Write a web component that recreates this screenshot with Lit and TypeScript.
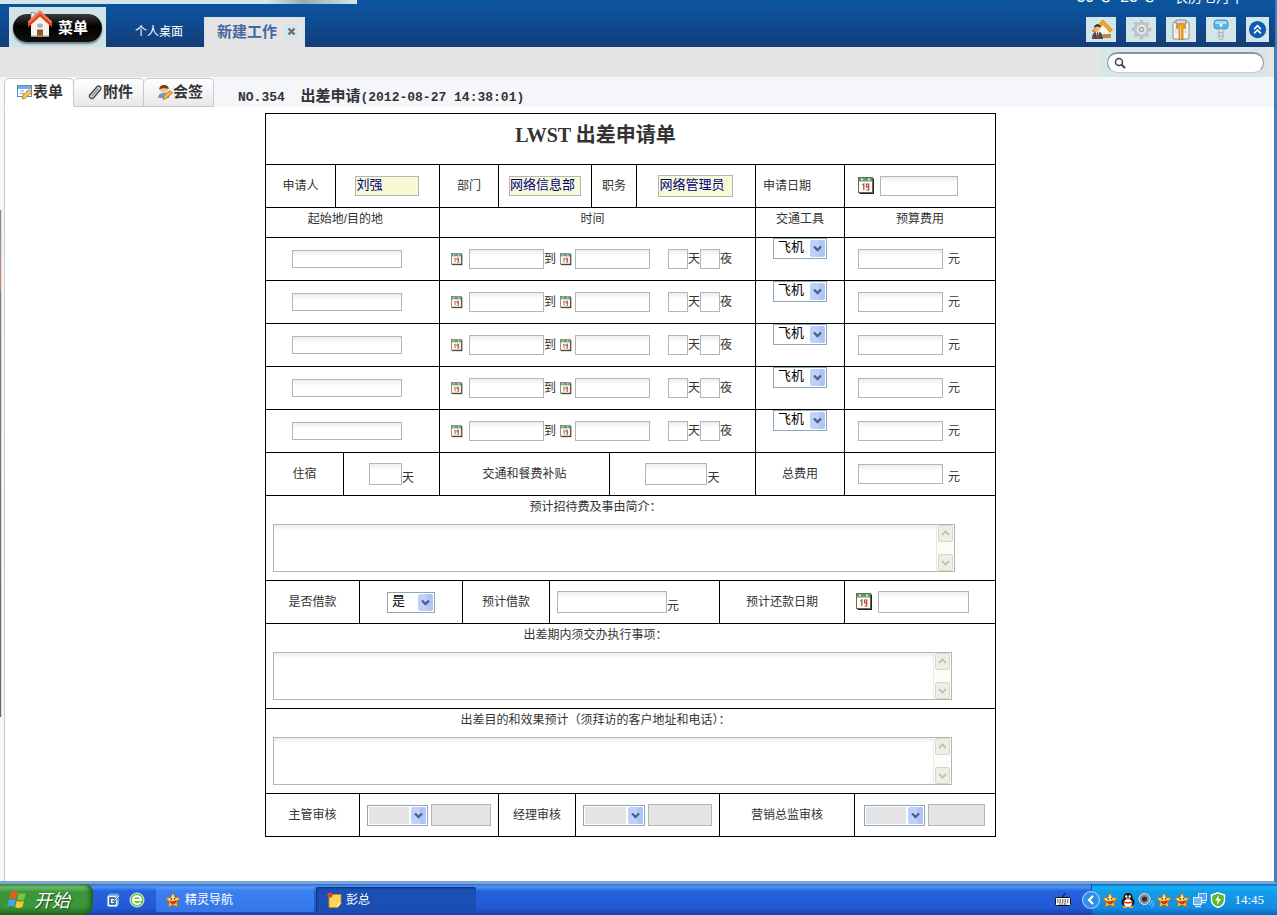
import { LitElement, html, css, svg, nothing } from "lit";
import { customElement, property } from "lit/decorators.js";

const icons = {
  house: svg`
    <rect x="4" y="2" width="4" height="8" fill="#e6e6e6" stroke="#777" stroke-width=".6"/>
    <path d="M4 13L13 5l9 8v13H4z" fill="#f7f3ec"/>
    <path d="M13 0L1 11v6l12-11 12 11v-6z" fill="#e2401c"/>
    <path d="M13 0L1 11l1 2L13 3l11 10 1-2z" fill="#f57b55"/>
    <rect x="10" y="13" width="6" height="4" rx="2" fill="#9db4c8"/>
    <rect x="10" y="19" width="6" height="7" fill="#8a5a2c"/>
    <rect x="4" y="25" width="18" height="1" fill="#b9a58a"/>`,
  form: svg`
    <rect x=".5" y="1.500" width="14" height="11" fill="#fff" stroke="#5b86c4"/>
    <rect x="1" y="2" width="13" height="3" fill="#7da7e0"/>
    <path d="M3 7h4M3 9.500h4M9 7h4" stroke="#7da7e0"/>
    <path d="M5 15l1-4 6.500-5.500L15 8l-6.500 6z" fill="#f6c552" stroke="#b07a20" stroke-width=".8"/>`,
  clip: svg`
    <path d="M3 11L10 2.800c1.600-1.600 5 .4 3.300 3L6.800 13.500c-2 2.200-5.600-.2-4-2.600L9.500 3.500" fill="none" stroke="#4a4a4a" stroke-width="1.500"/>
    <path d="M4.800 12.300L11.500 4.500" stroke="#9a9a9a" stroke-width="1.800"/>`,
  sign: svg`
    <circle cx="7" cy="5" r="4" fill="#f3c592"/>
    <path d="M2.500 6C1 0 12 -1 11.800 5 9 5 6 3 2.500 6z" fill="#7a3d14"/>
    <path d="M1 14c0-4 3-5 6-5s5 1 5.500 5z" fill="#5f9fdc"/>
    <path d="M6 15.500l1-4 6-5 2.500 2.500-6.500 5.500z" fill="#f6b552" stroke="#b06a20" stroke-width=".8"/>`,
  cal: svg`
    <rect x="1.500" y="1.500" width="14.500" height="15.500" fill="#222"/>
    <rect x=".5" y=".5" width="14" height="15" fill="#fffdf2" stroke="#6c6a4c"/>
    <rect x="1" y="1" width="13" height="3.500" fill="#5f9c7c"/>
    <path d="M4 1.500v2M11 1.500v2" stroke="#fff" stroke-width="1.500"/>
    <path d="M4.500 8l1.300-1v6M10.500 9.800h-2V7h2.200v6H8.500" fill="none" stroke="#b5413c" stroke-width="1.200"/>`,
  homeUser: svg`
    <path d="M8 8l6-5 6 6v10H8z" fill="#fdf6e3" stroke="#cbb791" stroke-width=".5"/>
    <path d="M3 12L14 1l9.500 10-2.500 2-7-7.500L6 13z" fill="#f4a823" stroke="#bd770e" stroke-width=".7"/>
    <circle cx="8.500" cy="9" r="2.800" fill="#e9b98a"/><path d="M5.300 9c-1-5 7.400-5 6.400 0-1.500-2-4.500-2-6.400 0z" fill="#3b2413"/>
    <path d="M3 20c0-5 2-7.500 5.500-7.500S14 15 14 20z" fill="#4b4b52"/><path d="M6.500 12.500L8.500 19l2-6.500z" fill="#fff"/><path d="M8 13h1.200l.3 4-1 1.500-1-1.500z" fill="#a33"/>
    <path d="M14 15h8v4h-8z" fill="#b98b4b"/>`,
  gear: svg`
    <path d="M11 1h2l1 3 2 .7 2.600-1.600 1.700 1.700-1.600 2.500.8 2.200 3 .8v2.400l-3 .9-.8 2 1.600 2.600-1.700 1.700-2.600-1.500-2 .8-1 3h-2l-1-3-2-.8-2.600 1.500L3.700 18l1.600-2.600-.8-2-3-.9v-2.400l3-.8.8-2.200-1.600-2.500 1.700-1.700L8 4.700 10 4z" fill="#c3c6c8" stroke="#a3a7aa" stroke-width=".6"/>
    <circle cx="12" cy="11.500" r="5.500" fill="#e6e8ea"/><circle cx="12" cy="11.500" r="3.200" fill="#a6aaad"/><circle cx="12" cy="11.500" r="1.500" fill="#d2e6ea"/>`,
  board: svg`
    <rect x="4" y="3" width="16" height="17" rx="1" fill="#f4f4f4" stroke="#8d8d8d"/>
    <path d="M7 1h10v4H7z" fill="#d8d8d8" stroke="#777" stroke-width=".8"/>
    <path d="M6 10h3M15 10h3M6 13h3M15 13h3" stroke="#c4c4c4"/>
    <path d="M7.500 6c1-1.500 8-1.500 9 0v3H14v11.500h-4V9H7.500z" fill="#f0a326" stroke="#b8760e" stroke-width=".7"/>
    <path d="M11.500 8v12" stroke="#ffd27a"/>`,
  key: svg`
    <rect x="5" y="1" width="14" height="9" rx="3" fill="#5db2ea" stroke="#2f87c6" stroke-width=".8"/>
    <rect x="6" y="2" width="12" height="3" rx="1.500" fill="#a9dbf8"/><circle cx="12" cy="6" r="1.500" fill="#fff"/>
    <path d="M10 10h4v10l-2 1-2-1z" fill="#e2e5e8" stroke="#9ba1a7" stroke-width=".7"/><path d="M8.500 13H15v1.500H8.500zM8.500 16.500H15V18H8.500z" fill="#b4babf"/>`,
  up: svg`
    <circle cx="12" cy="12" r="9" fill="#0f5cae"/>
    <path d="M8.500 11.500L12 8l3.500 3.500M8.500 16l3.500-3.500 3.500 3.500" fill="none" stroke="#fff" stroke-width="1.800"/>`,
  search: svg`
    <circle cx="5" cy="5" r="3.500" fill="none" stroke="#444" stroke-width="1.500"/><path d="M7.500 7.500L11 11" stroke="#444" stroke-width="2"/>`,
  close: svg`<path d="M1.500 1.500l6 6M7.500 1.500l-6 6" stroke="#666b70" stroke-width="2.200"/>`,
  chevron: svg`
    <rect x="0" y="0" width="15" height="17" rx="2" fill="#bfd1fb"/>
    <rect x="9" y="0" width="6" height="17" rx="2" fill="#aec5f6"/>
    <path d="M4 6.500l3.500 3.500L11 6.500" fill="none" stroke="#4d6185" stroke-width="2.400"/>`,
  barUp: svg`
    <rect x=".5" y=".5" width="14" height="16" rx="1.500" fill="#eeeee6" stroke="#d8d8ca"/><path d="M4 10l3.500-3.500L11 10" fill="none" stroke="#c3c3b8" stroke-width="2"/>`,
  barDown: svg`
    <rect x=".5" y=".5" width="14" height="16" rx="1.500" fill="#eeeee6" stroke="#d8d8ca"/><path d="M4 7l3.500 3.500L11 7" fill="none" stroke="#c3c3b8" stroke-width="2"/>`,
  flag: svg`
    <path d="M3 3c2-1.500 4-1.200 6 0L7.500 9C5.500 7.800 3.500 7.800 1.500 9z" fill="#ee5a24"/>
    <path d="M10 3.500c2 1 4 1 6.500 0L15 9.500c-2 1-4.500 1-6.300 0z" fill="#7dc242"/>
    <path d="M1.200 10c2-1.200 4-1 6 0l-1.500 6c-2-1.200-4-1.200-6 0z" fill="#4aa3e8"/>
    <path d="M8.300 10.500c2 1 4.500 1 6.500 0l-1.500 6c-2.500 1-4.500 1-6.500 0z" fill="#fcc62d"/>`,
  desktop: svg`
    <path d="M3 4l2-2.500h9V12l-2 2.500H3z" fill="#5aa7e6"/>
    <rect x="2.500" y="3.500" width="10" height="11" rx="1.500" fill="#f2f8fd" stroke="#8bbbe4"/>
    <path d="M10 6H5v6h5V9H7.500" fill="none" stroke="#1b4b8a" stroke-width="1.500"/><path d="M8 9.500l5.500-7L15 4 9.500 10z" fill="#cfe8fb" stroke="#1b4b8a" stroke-width=".7"/>`,
  browser: svg`
    <circle cx="8" cy="8" r="7" fill="#6cc24a" stroke="#dff3d6"/>
    <path d="M4 8h8c0-5-8-5-8 0s6 5 7.500 2.500" fill="none" stroke="#fff" stroke-width="1.800"/>`,
  star: svg`
    <path d="M8 .8l2.300 4.700 5.200.6-3.800 3.700 1.200 5.400L8 12.700l-4.900 2.500 1.200-5.400L.5 6.100l5.200-.6z" fill="#fcc33c" stroke="#a8691c" stroke-width=".8" stroke-linejoin="round"/>
    <path d="M8 2l1.700 4.200L14 6.800l-4 .9H5L2 6.800l4.300-.6z" fill="#ffe99a"/>
    <path d="M4.600 8.800c2 1 5 .8 7-.8 0 3-1.500 4-3.500 4S5 11 4.600 8.800z" fill="#d62a12"/>
    <circle cx="6.300" cy="6.900" r=".8" fill="#5a2a00"/><circle cx="9.600" cy="6.700" r=".8" fill="#5a2a00"/>`,
  note: svg`
    <path d="M3 2.500h12v9l-3.500 4H3z" fill="#fbd35a" stroke="#c98a1c" stroke-width=".8"/><path d="M11.500 15.500v-4H15z" fill="#fff2b8"/><circle cx="4" cy="3" r="2.600" fill="#d9472b"/>`,
  keyboard: svg`
    <path d="M8 5c-1-3 3-1 2-4" fill="none" stroke="#111"/><rect x=".5" y="5.500" width="15" height="8" rx="1" fill="#fff" stroke="#111"/>
    <path d="M2 8h12M2 10h12M4 12h8" stroke="#111" stroke-dasharray="1.500 1"/>`,
  back: svg`
    <circle cx="8" cy="8" r="7.500" fill="#2f8fe6" stroke="#9cd0fb"/><path d="M9.800 4.500L6.300 8l3.500 3.500" fill="none" stroke="#fff" stroke-width="2"/>`,
  qq: svg`
    <ellipse cx="8" cy="10" rx="6.500" ry="5" fill="#111"/><circle cx="8" cy="5.500" r="4.500" fill="#111"/><ellipse cx="8" cy="11" rx="4" ry="4" fill="#fff"/>
    <circle cx="6.300" cy="4.500" r="1.200" fill="#fff"/><circle cx="9.700" cy="4.500" r="1.200" fill="#fff"/><ellipse cx="8" cy="6.800" rx="2.200" ry=".9" fill="#f6a51e"/>
    <path d="M3 8.500c3 2 7 2 10 0v2c-3 1.500-7 1.500-10 0z" fill="#d92b1f"/><path d="M3 15h4M9 15h4" stroke="#f6a51e" stroke-width="1.800"/>`,
  speaker: svg`
    <circle cx="6.500" cy="7" r="5.500" fill="#8a8f96" stroke="#e4e6e8"/><circle cx="6.500" cy="7" r="2.600" fill="#2d3035"/>
    <path d="M11 13c2-1 3-3 3-5M13.500 15c2-1.500 2.500-4 2.500-6" fill="none" stroke="#8fc6f7"/>`,
  network: svg`
    <rect x="6.500" y="1.500" width="8" height="7" fill="#5aa3ea" stroke="#d5e8fa"/><rect x="1.500" y="5.500" width="8" height="7" fill="#77b8f2" stroke="#e3f0fc"/><path d="M3 14.500h6M9 10.500h5" stroke="#d5e8fa" stroke-width="1.500"/>`,
  shield: svg`
    <path d="M8 .8l6.500 2.200v5C14.500 12 11 14.500 8 15.500 5 14.500 1.500 12 1.500 8V3z" fill="#5cb531" stroke="#fff" stroke-width="1.400"/><path d="M9 3L5 8.500h2.500L7 13l4-6H8.500z" fill="#fff"/>`,
};
type IconName = keyof typeof icons;

const icon = (name: IconName, w: number, h: number, box = "0 0 16 16") =>
  html`<svg width=${w} height=${h} viewBox=${box} aria-hidden="true">${icons[name]}</svg>`;

@customElement("xp-select")
class XpSelect extends LitElement {
  @property() value = "";
  @property() name = "";
  @property({ type: Number }) width = 54;
  @property({ type: Boolean }) disabled = false;
  @property({ type: Array }) options: string[] = [];
  static styles = css`
    .box { display: grid; height: 21px; box-sizing: border-box; border: 1px solid #8aa7bb; background: #fff; padding: 1px; }
    select { grid-area: 1 / 1; appearance: none; border: 0; margin: 0; padding: 0 18px 3px 3px; width: 100%; height: 17px; min-width: 0;
      background: #fff; color: #000; font: 13px/14px "Liberation Sans", "Noto Sans CJK SC", sans-serif; border-radius: 0; opacity: 1; }
    select:disabled { background: #e4e4e4; border-right: 17px solid #fff; }
    svg { grid-area: 1 / 1; justify-self: end; pointer-events: none; z-index: 1; display: block; }
  `;
  render() {
    return html`<div class="box" style="width:${this.width}px">
      <select aria-label=${this.name} ?disabled=${this.disabled}>
        ${this.options.map((o) => html`<option ?selected=${o === this.value}>${o}</option>`)}
      </select>
      ${icon("chevron", 15, 17, "0 0 15 17")}
    </div>`;
  }
}

@customElement("travel-form")
class TravelForm extends LitElement {
  static styles = css`
    :host { display: block; }
    table { width: 100%; max-width: 731px; border-collapse: collapse; table-layout: fixed; margin: 0 auto; }
    td, th { border: 1px solid #000; padding: 0; font-weight: normal; text-align: center; vertical-align: middle; }
    tr { height: 43px; }
    .title-row { height: 51px; }
    .head-row { height: 30px; }
    .text-row { height: 85px; }
    h1 { margin: 0; padding: 0 70px 8px 0; font: bold 20px/24px "Liberation Serif", "Noto Sans CJK SC", serif; color: #333; }
    .top { vertical-align: top; }
    .head-row th { vertical-align: top; padding-top: 2px; }
    .head-row .route { padding-right: 14px; }
    .head-row .time { padding-right: 10px; }
    .left { text-align: left; padding-left: 7px; }
    .line { display: flex; align-items: center; justify-content: center; }
    .low { align-items: flex-end; }
    .start { justify-content: flex-start; }
    .pad-s { padding-left: 7px; }
    .pad-m { padding-left: 11px; }
    .pad-l { padding-left: 13px; }
    .shift { padding-right: 10px; }
    .gap-s { gap: 3px; }
    .gap-m { gap: 5px; }
    .gap-l { gap: 6px; }
    .low > span { margin-bottom: -2px; }
    .nights { margin-left: 18px; }
    .to { margin-right: 4px; }
    input, textarea { box-sizing: border-box; margin: 0; border: 1px solid #b5b5b5; border-radius: 0; padding: 0 1px; height: 20px;
      background: linear-gradient(#e6eff3, #fff 6px); font: 13px/14px "Liberation Sans", "Noto Sans CJK SC", sans-serif; color: #333; outline: 0; }
    input:disabled { background: #e4e4e4; height: 22px; }
    input[readonly] { background: #f8fad4; color: #00008b; padding: 0 0 6px; line-height: 12px; }
    .tall { height: 22px; }
    .short { height: 18px; }
    button { border: 0; padding: 0; margin: 0; background: none; display: flex; }
    .caption { display: block; padding: 2px 70px 8px 0; }
    .area { display: flex; margin-left: 7px; max-width: 682px; border: 1px solid #b5b5b5; box-sizing: border-box; height: 48px; }
    .area textarea { border: 0; flex: 1; min-width: 0; height: auto; resize: none; overflow: hidden; }
    .bar { display: flex; flex-direction: column; justify-content: space-between; background: #fcfcf8; border-left: 1px solid #eceade; padding: 0 1px; }
    .bar svg { display: block; }
    .narrow { max-width: 679px; }
  `;

  private cols = [70, 8, 16, 80, 23, 36, 51, 26, 16, 18, 27, 83, 36, 89, 10, 141];

  private box(name: string, width: number, cls = "", id = "") {
    return html`<input type="text" class=${cls} id=${id || nothing} aria-label=${name} style="width:${width}px">`;
  }
  private cal(size: number, name: string) {
    return html`<button type="button" aria-label=${name}>${icon("cal", size, size + 1, "0 0 17 18")}</button>`;
  }
  private leg(n: number) {
    return html`<tr>
      <td colspan="4"><div class="line shift">${this.box(`起始地/目的地 ${n}`, 110, "short")}</div></td>
      <td colspan="9"><div class="line start pad-m">
        <span class="line gap-l">${this.cal(12, "选择开始日期")}${this.box(`开始时间 ${n}`, 75)}</span>
        <span class="to">到</span>
        <span class="line gap-s">${this.cal(12, "选择结束日期")}${this.box(`结束时间 ${n}`, 75)}</span>
        <span class="line nights">${this.box(`天数 ${n}`, 20)}天${this.box(`夜数 ${n}`, 20)}夜</span>
      </div></td>
      <td class="top"><div class="line"><xp-select name="交通工具 ${n}" value="飞机" .options=${["飞机", "火车", "汽车"]} width="54"></xp-select></div></td>
      <td colspan="2"><div class="line start pad-l gap-m">${this.box(`预算费用 ${n}`, 85)}<span>元</span></div></td>
    </tr>`;
  }
  private area(id: string, text: string, cls = "") {
    return html`<tr class="text-row"><td colspan="16" class="top">
      <label class="caption" for=${id}>${text}</label>
      <div class="area ${cls}"><textarea id=${id}></textarea>
        <span class="bar">${icon("barUp", 15, 17, "0 0 15 17")}${icon("barDown", 15, 17, "0 0 15 17")}</span></div>
    </td></tr>`;
  }
  private review(name: string, sw: number, iw: number) {
    return html`<div class="line gap-s"><xp-select name=${name} width=${sw} disabled .options=${[""]}></xp-select>
      <input type="text" disabled aria-label="${name}人" style="width:${iw}px"></div>`;
  }

  render() {
    return html`<table>
      <colgroup>${this.cols.map((w) => html`<col style="width:${w}px">`)}</colgroup>
      <tbody>
        <tr class="title-row"><td colspan="16"><h1>LWST 出差申请单</h1></td></tr>
        <tr>
          <td><label for="who">申请人</label></td>
          <td colspan="3"><div class="line"><input id="who" readonly value="刘强" style="width:64px"></div></td>
          <td colspan="2"><label for="dept">部门</label></td>
          <td colspan="3"><div class="line"><input id="dept" readonly value="网络信息部" style="width:72px"></div></td>
          <td colspan="2"><label for="job">职务</label></td>
          <td colspan="2"><div class="line"><input id="job" class="tall" readonly value="网络管理员" style="width:75px"></div></td>
          <td class="left"><label for="date">申请日期</label></td>
          <td colspan="2"><div class="line start pad-l gap-m">${this.cal(17, "选择申请日期")}${this.box("申请日期", 78, "", "date")}</div></td>
        </tr>
        <tr class="head-row">
          <th colspan="4" class="route">起始地/目的地</th><th colspan="9" class="time">时间</th><th>交通工具</th><th colspan="2">预算费用</th>
        </tr>
        ${[1, 2, 3, 4, 5].map((n) => this.leg(n))}
        <tr>
          <td colspan="2"><label for="stay">住宿</label></td>
          <td colspan="2"><div class="line low">${this.box("住宿", 33, "tall", "stay")}<span>天</span></div></td>
          <td colspan="6"><label for="allow">交通和餐费补贴</label></td>
          <td colspan="3"><div class="line low">${this.box("交通和餐费补贴", 62, "tall", "allow")}<span>天</span></div></td>
          <td><label for="total">总费用</label></td>
          <td colspan="2"><div class="line low start pad-l gap-m">${this.box("总费用", 85, "", "total")}<span>元</span></div></td>
        </tr>
        ${this.area("host", "预计招待费及事由简介：")}
        <tr>
          <td colspan="3">是否借款</td>
          <td colspan="2"><div class="line"><xp-select name="是否借款" value="是" .options=${["是", "否"]} width="48"></xp-select></div></td>
          <td colspan="2"><label for="loan">预计借款</label></td>
          <td colspan="5"><div class="line low start pad-s">${this.box("预计借款", 110, "tall", "loan")}<span>元</span></div></td>
          <td colspan="2"><label for="repay">预计还款日期</label></td>
          <td colspan="2"><div class="line start pad-m gap-m">${this.cal(17, "选择还款日期")}${this.box("预计还款日期", 91, "tall", "repay")}</div></td>
        </tr>
        ${this.area("todo", "出差期内须交办执行事项：", "narrow")}
        ${this.area("goal", "出差目的和效果预计（须拜访的客户地址和电话）：", "narrow")}
        <tr>
          <td colspan="3">主管审核</td><td colspan="3">${this.review("主管审核", 61, 60)}</td>
          <td colspan="2">经理审核</td><td colspan="4">${this.review("经理审核", 62, 64)}</td>
          <td colspan="3">营销总监审核</td><td>${this.review("营销总监审核", 61, 57)}</td>
        </tr>
      </tbody>
    </table>`;
  }
}

@customElement("app-root")
class AppRoot extends LitElement {
  static styles = css`
    :host { display: flex; flex-direction: column; min-height: 100vh; background: #f5f6f9; color: #333;
      font: 12px/18px "Liberation Sans", "Noto Sans CJK SC", sans-serif; }
    svg { display: block; flex: none; }
    button { border: 0; margin: 0; padding: 0; font: inherit; color: inherit; background: none; }
    .window { flex: 1; display: flex; flex-direction: column; border-right: 3px solid #3f7fbd; border-bottom: 3px solid #7aa5d8; }
    header { position: relative; height: 47px; display: flex; align-items: flex-end; background: linear-gradient(#0c56a0, #0e4b91 50%, #153c77); margin-right: -1px; }
    .strip { position: absolute; left: 0; top: 0; width: 357px; height: 4px; background: linear-gradient(90deg, #d3e7ea 75%, #98acae 85%, #d3e7ea); }
    .weather { position: absolute; right: 31px; top: 0; height: 5px; overflow: hidden; color: #fff; font-size: 14px; }
    .weather p { display: flex; align-items: baseline; gap: 20px; margin: -12px 0 0; line-height: 18px; white-space: nowrap; }
    .weather .temp { display: flex; gap: 10px; font-size: 16px; }
    .menu { background: #cfe4e7; margin-left: 9px; padding: 7px 4px 5px; display: flex; }
    .menu button { width: 89px; height: 28px; border-radius: 14px; background: linear-gradient(#3a3a3a, #000 45%, #111); color: #fff;
      box-shadow: 0 2px 2px #6c7c80; display: flex; align-items: center; padding-left: 14px; gap: 5px; font-size: 15px; font-weight: bold; }
    .menu svg { margin-top: -8px; }
    .desk { color: #fff; text-decoration: none; margin-left: 29px; padding-bottom: 6px; }
    .worktab { margin-left: 21px; height: 30px; width: 101px; box-sizing: border-box; background: #e4e4e4; border: 1px solid #d3e4ea; border-width: 1px 2px 0;
      display: flex; align-items: center; padding: 0 4px 2px 11px; gap: 7px; color: #4466a0; font-weight: bold; font-size: 15px; white-space: nowrap; }
    .worktab button { background: #d6e6e9; width: 16px; height: 16px; display: grid; place-items: center; }
    .tools { margin-left: auto; display: flex; gap: 10px; padding: 0 6px 5px 0; }
    .tools button { background: #d2e6ea; width: 30px; height: 25px; display: grid; place-items: center; }
    .tools .small { width: 23px; }
    .searchbar { height: 30px; background: #e4e4e4; display: flex; justify-content: flex-end; align-items: center; padding-right: 6px; }
    .searchwrap { background: #d6e6e9; height: 100%; display: flex; align-items: center; padding: 0 4px 0 6px; }
    .pill { display: flex; align-items: center; width: 157px; height: 21px; box-sizing: border-box; border: 1px solid #8f9496; border-top-width: 2px; border-radius: 11px;
      border-bottom-color: #c4cccf; background: #fff; padding: 0 8px 0 6px; gap: 4px; }
    .pill input { flex: 1; min-width: 0; border: 0; outline: 0; background: none; padding: 0; height: 15px; }
    .tabs { height: 30px; display: flex; align-items: flex-end; padding-left: 4px; }
    .tabs a { display: flex; align-items: center; width: 70px; height: 29px; box-sizing: border-box; border: 1px solid #c9c9c9; border-left-width: 0;
      border-radius: 5px 5px 0 0; background: linear-gradient(#fff, #e8e8e8); color: #333; text-decoration: none; font-size: 15px; font-weight: bold; white-space: nowrap; padding: 0 0 2px 13px; }
    .tabs a.on { border-left-width: 1px; border-bottom-color: #fff; background: #fff; padding-left: 12px; }
    .doc { margin: 0 0 0 24px; font: bold 13px/18px "Liberation Mono", "Noto Sans CJK SC", monospace; white-space: pre; }
    .doc span { font-size: 15px; }
    main { flex: 1; background: #fff; border-left: 1px solid #c6ccd2; margin-left: 4px; padding: 6px 18px 12px 0; }
    .page { flex: 1; display: flex; position: relative; }
    .edge { position: absolute; left: 0; top: 103px; width: 1px; height: 507px; background: linear-gradient(#8a8a8a, #c98d6a 15%, #777 17%, #666); border-right: 1px solid #ddd; }
    footer { height: 31px; display: flex; align-items: center; color: #fff;
      background: linear-gradient(#3a6fc4, #4b94f5 3px, #2661dc 7px, #2259d6 24px, #1941a5); }
    .start { width: 93px; height: 31px; display: flex; align-items: center; gap: 7px; padding: 0 0 2px 7px; border-radius: 0 8px 10px 0; font: italic 18px/24px "Noto Sans CJK SC", sans-serif;
      background: linear-gradient(#5c9c5c, #6cc06c 3px, #3c943c 8px, #3a973a 22px, #256b25); box-shadow: inset -3px 0 4px #1d5f1d; text-shadow: 1px 1px 1px #1b4a1b; }
    .quick { display: flex; gap: 8px; padding: 0 11px 0 12px; }
    .task { width: 158px; height: 25px; display: flex; align-items: center; gap: 4px; padding-left: 9px; border-radius: 2px; background: linear-gradient(#5a9bf8, #3c7ff0 4px, #3577ea); margin-right: 2px; }
    .task.active { background: #1c4fb4; box-shadow: inset 1px 1px 2px #0d2f78; width: 160px; padding-left: 10px; }
    .kb { margin-left: auto; padding-right: 20px; }
    .tray { height: 31px; display: flex; align-items: center; gap: 2px; padding-right: 13px; border-left: 1px solid #0b4fb0;
      background: linear-gradient(#0c63bc, #18b0f4 3px, #119be9 8px, #128de4 24px, #0a62b8); }
    .tray .back { margin-left: -10px; }
    .tray time { font: 13px/16px "Liberation Serif", serif; margin-left: 6px; }
  `;
  render() {
    return html`
      <div class="window">
        <header>
          <div class="strip"></div>
          <div class="weather"><p><span class="temp"><span>30℃</span><span>23℃</span></span><span>农历七月十</span></p></div>
          <div class="menu"><button type="button">${icon("house", 26, 28, "0 0 26 27")}菜单</button></div>
          <a class="desk" href="#desk">个人桌面</a>
          <div class="worktab">新建工作<button type="button" aria-label="关闭">${icon("close", 9, 9, "0 0 9 9")}</button></div>
          <nav class="tools">
            <button type="button" aria-label="主页">${icon("homeUser", 24, 22, "0 0 24 22")}</button>
            <button type="button" aria-label="设置">${icon("gear", 21, 21, "0 0 24 23")}</button>
            <button type="button" aria-label="任务">${icon("board", 24, 22, "0 0 24 22")}</button>
            <button type="button" aria-label="密码">${icon("key", 24, 22, "0 0 24 22")}</button>
            <button type="button" class="small" aria-label="收起">${icon("up", 23, 23, "0 0 24 24")}</button>
          </nav>
        </header>
        <div class="searchbar"><div class="searchwrap"><label class="pill">${icon("search", 12, 12, "0 0 12 12")}<input type="search" aria-label="搜索"></label></div></div>
        <div class="tabs">
          <a class="on" href="#form">${icon("form", 16, 16)}表单</a>
          <a href="#files">${icon("clip", 16, 16)}附件</a>
          <a href="#sign">${icon("sign", 16, 16)}会签</a>
          <p class="doc">NO.354  <span>出差申请</span>(2012-08-27 14:38:01)</p>
        </div>
        <div class="page"><div class="edge"></div><main><travel-form></travel-form></main></div>
      </div>
      <footer>
        <button type="button" class="start">${icon("flag", 20, 20, "0 0 17 18")}开始</button>
        <div class="quick">${icon("desktop", 16, 16)}${icon("browser", 16, 16)}</div>
        <button type="button" class="task">${icon("star", 16, 16)}精灵导航</button>
        <button type="button" class="task active">${icon("note", 16, 16)}彭总</button>
        <span class="kb">${icon("keyboard", 16, 16)}</span>
        <div class="tray">
          <span class="back">${icon("back", 18, 18)}</span>
          ${(["star", "qq", "speaker", "star", "star", "network", "shield"] as IconName[]).map((n) => icon(n, 16, 16))}
          <time>14:45</time>
        </div>
      </footer>`;
  }
}
